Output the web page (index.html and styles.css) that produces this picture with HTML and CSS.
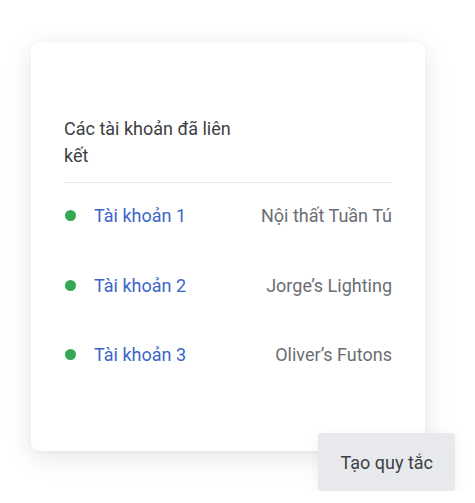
FILE: index.html
```html
<!DOCTYPE html>
<html lang="vi">
<head>
  <meta charset="UTF-8">
  <meta name="viewport" content="width=device-width, initial-scale=1.0">
  <title>Tài khoản đã liên kết</title>
  <link rel="stylesheet" href="styles.css">
</head>
<body>

<div class="page">
  <div class="card">
    <div class="cardTitle">Các tài khoản đã liên kết</div>
    <div class="accountList">
      <div class="accountRow">
        <span class="dot"></span>
        <span class="accountName">Tài khoản 1</span>
        <span class="accountOwner">Nội thất Tuần Tú</span>
      </div>
      <div class="accountRow">
        <span class="dot"></span>
        <span class="accountName">Tài khoản 2</span>
        <span class="accountOwner">Jorge’s Lighting</span>
      </div>
      <div class="accountRow">
        <span class="dot"></span>
        <span class="accountName">Tài khoản 3</span>
        <span class="accountOwner">Oliver’s Futons</span>
      </div>
    </div>
  </div>

  <!-- floating action -->
  <button class="ruleButton">Tạo quy tắc</button>
</div>

</body>
</html>
```

FILE: styles.css
```css
body {
  margin: 0;
  padding: 0;
  background: #ffffff;
  font-family: Roboto, "Noto Sans", sans-serif;
}

.page {
  display: flex;
  flex-direction: column;
  align-items: flex-start;
  padding: 42px 20px 0 31px;
}

.card {
  box-sizing: border-box;
  width: 394px;
  height: 409px;
  padding: 73px 33px 0 33px;
  background: #ffffff;
  border-radius: 8px;
  box-shadow: 0 6px 28px rgba(0, 0, 0, 0.10), 0 1px 4px rgba(0, 0, 0, 0.04);
}

.cardTitle {
  max-width: 190px;
  font-size: 18px;
  line-height: 27px;
  color: #3c4043;
  padding-bottom: 13px;
}

.accountList {
  border-top: 1px solid #e6e6e6;
}

.accountRow {
  display: flex;
  align-items: center;
  height: 69.5px;
  font-size: 18px;
}

.accountRow:first-child {
  margin-top: -2px;
}

.dot {
  width: 11px;
  height: 11px;
  border-radius: 50%;
  background: #34a853;
  margin: 0 18px 0 1px;
}

.accountName {
  color: #3b66c9;
}

.accountOwner {
  margin-left: auto;
  color: #6a6e72;
}

.ruleButton {
  align-self: flex-end;
  margin-top: -18px;
  height: 58px;
  padding: 0 22px;
  border: none;
  border-radius: 4px;
  background: #e8e9ed;
  color: #3c4043;
  font-family: inherit;
  font-size: 18px;
  cursor: pointer;
  box-shadow: 0 4px 14px rgba(0, 0, 0, 0.06);
}
```
